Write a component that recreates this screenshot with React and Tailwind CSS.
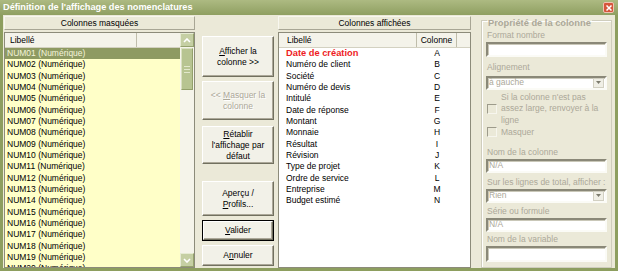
const hidden = Array.from({ length: 20 }, (_, i) => `NUM${String(i + 1).padStart(2, '0')} (Numérique)`);

const shown = [
  ['Date de création', 'A'],
  ['Numéro de client', 'B'],
  ['Société', 'C'],
  ['Numéro de devis', 'D'],
  ['Intitulé', 'E'],
  ['Date de réponse', 'F'],
  ['Montant', 'G'],
  ['Monnaie', 'H'],
  ['Résultat', 'I'],
  ['Révision', 'J'],
  ['Type de projet', 'K'],
  ['Ordre de service', 'L'],
  ['Entreprise', 'M'],
  ['Budget estimé', 'N'],
];

function PanelTitle({ children }) {
  return (
    <div className="mt-[1px] h-[14px] flex items-center justify-center bg-[#ebe9d8] border border-[#f8f7ef] border-b-[#a8a695] border-r-[#a8a695] leading-[12px]">
      {children}
    </div>
  );
}

function Btn({ children, className = '', disabled = false, def = false }) {
  const inner = (
    <div
      className={`h-full w-full flex flex-col items-center justify-center text-center leading-[11px] bg-[#f2f1e8] border border-t-white border-l-white border-r-[#71705f] border-b-[#71705f] shadow-[inset_-1px_-1px_0_#aca899] ${
        disabled ? 'text-[#aca899] [text-shadow:1px_1px_0_#fff]' : 'text-black'
      }`}
    >
      {children}
    </div>
  );
  return def ? (
    <div className={`border border-black ${className}`}>{inner}</div>
  ) : (
    <div className={className}>{inner}</div>
  );
}

function Arrow({ up }) {
  return (
    <div className="h-[14px] w-[14px] flex items-center justify-center bg-[#c5cfa3] border border-[#e6ebd3] border-b-[#95a26d] border-r-[#95a26d]">
      <svg width="8" height="5" viewBox="0 0 8 5">
        <path d={up ? 'M1 4 L4 1 L7 4' : 'M1 1 L4 4 L7 1'} fill="none" stroke="#fff" strokeWidth="1.6" />
      </svg>
    </div>
  );
}

function Sunken({ className = '', children }) {
  return (
    <div
      className={`ml-[4px] mr-[4px] flex items-center bg-white border-2 border-t-[#8a8878] border-l-[#8a8878] border-r-[#fbfbf6] border-b-[#fbfbf6] shadow-[inset_1px_1px_0_#c9c7b8] pl-[1px] text-[#aca899] ${className}`}
    >
      {children}
    </div>
  );
}

function Select({ value, className = '' }) {
  return (
    <Sunken className={`justify-between ${className}`}>
      <span>{value}</span>
      <div className="mr-[1px] h-[10px] w-[11px] flex items-center justify-center bg-[#f0efe6] border border-[#d2d0c2]">
        <svg width="5" height="3" viewBox="0 0 5 3">
          <path d="M0 0 H5 L2.5 3 Z" fill="#7c7b6e" />
        </svg>
      </div>
    </Sunken>
  );
}

function Check() {
  return (
    <div className="shrink-0 h-[10px] w-[10px] bg-[#ebe9d8] border border-t-[#9d9b8b] border-l-[#9d9b8b] border-r-[#f7f6ee] border-b-[#f7f6ee]" />
  );
}

export default function App() {
  return (
    <div
      className="w-[618px] h-[271px] flex flex-col bg-[#8d9e5f] overflow-hidden text-[8.5px] text-black"
      style={{ fontFamily: '"Liberation Sans", Arial, sans-serif' }}
    >
      <div className="h-[15px] shrink-0 flex items-center justify-between pl-[3px] pr-[4px] bg-gradient-to-b from-[#adba82] to-[#8f9f61]">
        <span className="text-[9.2px] font-bold text-white leading-[15px]">Définition de l'affichage des nomenclatures</span>
        <div className="h-[11px] w-[11px] flex items-center justify-center rounded-[2px] bg-[#d5563c] border border-[#f1c2b3]">
          <svg width="6" height="6" viewBox="0 0 6 6">
            <path d="M0.5 0.5 L5.5 5.5 M5.5 0.5 L0.5 5.5" stroke="#fff" strokeWidth="1.5" />
          </svg>
        </div>
      </div>

      <div className="flex-1 mx-[3px] mb-[3px] bg-[#ebe9d8] flex min-h-0">
        {/* colonnes masquées */}
        <div className="ml-[1px] w-[191px] flex flex-col">
          <PanelTitle>Colonnes masquées</PanelTitle>
          <div className="mt-[2px] flex-1 min-h-0 flex border border-[#8c8b7a] bg-[#ffffc8] overflow-hidden">
            <div className="flex-1 flex flex-col min-w-0">
              <div className="h-[15px] shrink-0 flex bg-[#f4f3ea] border-b border-[#d3d1c1]">
                <div className="w-[132px] pl-[5px] leading-[15px] border-r border-[#bfbdab]">Libellé</div>
                <div className="flex-1" />
              </div>
              {hidden.map((t, i) => (
                <div
                  key={t}
                  className={`h-[11.33px] shrink-0 pl-[2px] leading-[11.33px] whitespace-nowrap ${
                    i === 0 ? 'bg-[#8e9a62] text-[#f4f4dc]' : ''
                  }`}
                >
                  {t}
                </div>
              ))}
            </div>
            <div className="w-[14px] shrink-0 flex flex-col bg-[#f5f4ea]">
              <Arrow up />
              <div className="mt-[1px] mx-[1px] h-[42px] flex flex-col items-center justify-center gap-[2px] bg-[#b7c491] border border-[#d9e0c0] border-b-[#93a06b] border-r-[#93a06b]">
                <div className="h-px w-[6px] bg-[#e2e8cc]" />
                <div className="h-px w-[6px] bg-[#e2e8cc]" />
                <div className="h-px w-[6px] bg-[#e2e8cc]" />
              </div>
              <div className="flex-1" />
              <Arrow />
            </div>
          </div>
        </div>

        {/* boutons */}
        <div className="ml-[7px] w-[72px] flex flex-col">
          <Btn className="mt-[21px] h-[41px]">
            <span><span className="underline">A</span>fficher la</span>
            <span>colonne &gt;&gt;</span>
          </Btn>
          <Btn disabled className="mt-[4px] h-[39px]">
            <span>&lt;&lt; <span className="underline">M</span>asquer la</span>
            <span>colonne</span>
          </Btn>
          <Btn className="mt-[6px] h-[38px]">
            <span><span className="underline">R</span>établir</span>
            <span>l'affichage par</span>
            <span>défaut</span>
          </Btn>
          <Btn className="mt-[17px] h-[35px]">
            <span>Aperçu /</span>
            <span><span className="underline">P</span>rofils...</span>
          </Btn>
          <Btn def className="mt-[4px] h-[21px]">
            <span><span className="underline">V</span>alider</span>
          </Btn>
          <Btn className="mt-[4px] h-[21px]">
            <span>A<span className="underline">n</span>nuler</span>
          </Btn>
        </div>

        {/* colonnes affichées */}
        <div className="ml-[4px] w-[193px] flex flex-col">
          <PanelTitle>Colonnes affichées</PanelTitle>
          <div className="mt-[2px] flex-1 min-h-0 flex flex-col border border-[#8c8b7a] bg-white overflow-hidden">
            <div className="h-[15px] shrink-0 flex bg-[#f4f3ea] border-b border-[#d3d1c1]">
              <div className="w-[138px] pl-[8px] leading-[15px] border-r border-[#bfbdab]">Libellé</div>
              <div className="w-[40px] text-center leading-[15px] border-r border-[#bfbdab]">Colonne</div>
              <div className="flex-1" />
            </div>
            {shown.map(([l, c], i) => (
              <div key={l} className="h-[11.33px] shrink-0 flex leading-[11.33px]">
                <div
                  className={`w-[138px] pl-[7px] whitespace-nowrap ${
                    i === 0 ? 'font-bold text-[9.3px] text-[#ee1c25]' : ''
                  }`}
                >
                  {l}
                </div>
                <div className="w-[40px] text-center">{c}</div>
              </div>
            ))}
          </div>
        </div>

        {/* propriété */}
        <fieldset className="ml-[10px] mt-[-2.5px] w-[131px] flex flex-col border border-[#cfcdbd] shadow-[inset_1px_1px_0_#fff] text-[#aca899]">
          <legend className="ml-[5px] px-[1px] pt-[6px] text-[9.3px] leading-[9px] font-bold text-[#aca899]">
            Propriété de la colonne
          </legend>
          <div className="mt-[2.5px] pl-[5px] leading-[10px]">Format nombre</div>
          <Sunken className="mt-[1.5px] h-[15px]" />
          <div className="mt-[5px] pl-[5px] leading-[10px]">Alignement</div>
          <Select value="à gauche" className="mt-[4px] h-[14px]" />
          <div className="mt-[2px] ml-[5px] flex items-center gap-[4px]">
            <Check />
            <div className="leading-[11.5px]">
              Si la colonne n'est pas
              <br />
              assez large, renvoyer à la
              <br />
              ligne
            </div>
          </div>
          <div className="mt-[0.5px] ml-[5px] flex items-center gap-[4px] leading-[10px]">
            <Check />
            <span>Masquer</span>
          </div>
          <div className="mt-[10px] pl-[5px] leading-[10px]">Nom de la colonne</div>
          <Sunken className="mt-[2px] h-[14px]">N/A</Sunken>
          <div className="mt-[4px] pl-[5px] leading-[10px]">Sur les lignes de total, afficher :</div>
          <Select value="Rien" className="mt-[2px] h-[14px]" />
          <div className="mt-[3px] pl-[5px] leading-[10px]">Série ou formule</div>
          <Sunken className="mt-[2px] h-[14px]">N/A</Sunken>
          <div className="mt-[2px] pl-[5px] leading-[10px]">Nom de la variable</div>
          <Sunken className="mt-[2px] h-[16px]" />
        </fieldset>
      </div>
    </div>
  );
}
